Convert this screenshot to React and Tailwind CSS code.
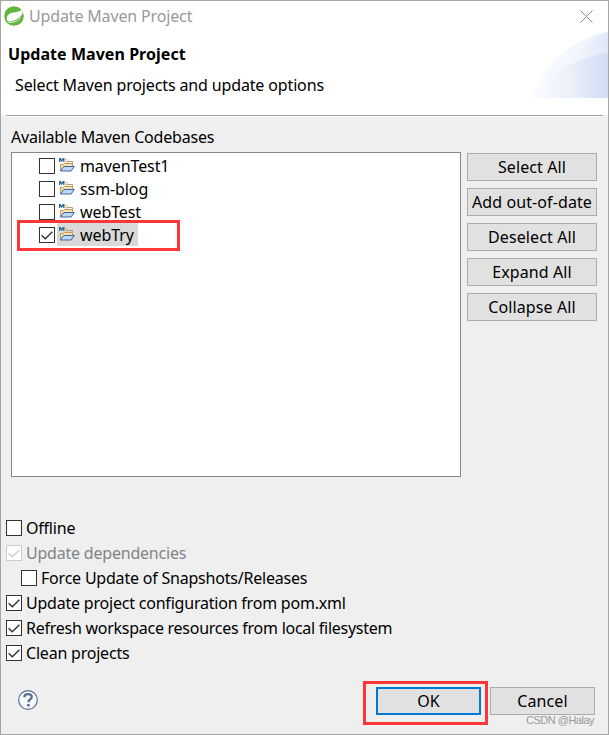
import React, { useState } from "react";

/* ---------- DATA ---------- */

const PROJECTS = ["mavenTest1", "ssm-blog", "webTest", "webTry"];

const LIST_ACTIONS = [
  "Select All",
  "Add out-of-date",
  "Deselect All",
  "Expand All",
  "Collapse All",
];

const OPTIONS = [
  { id: "offline", label: "Offline" },
  { id: "deps", label: "Update dependencies", disabled: true },
  { id: "force", label: "Force Update of Snapshots/Releases", nested: true },
  { id: "config", label: "Update project configuration from pom.xml" },
  { id: "refresh", label: "Refresh workspace resources from local filesystem" },
  { id: "clean", label: "Clean projects" },
];

/* ---------- ICONS ---------- */

const SpringIcon = () => (
  <svg width="20" height="20" viewBox="0 0 20 20" className="shrink-0">
    <circle cx="10" cy="10" r="9.8" fill="#62b53c" />
    <path
      d="M18.2 2.6C16.6 5.4 14.6 6 11.4 6.2C6.2 6.5 3 8.8 2.8 12C2.7 13.6 3.2 14.8 4 15.4C9.4 15.6 15.6 12.8 18.6 7.4C18.8 5.6 18.7 4 18.2 2.6Z"
      fill="#fff"
    />
    <path
      d="M4.4 16.2C8.6 16.8 13.6 15.8 17 11.2"
      fill="none"
      stroke="#fff"
      strokeWidth="0.8"
    />
  </svg>
);

const CloseIcon = () => (
  <svg width="13" height="13" viewBox="0 0 13 13">
    <path d="M0.5 0.5L12.5 12.5M12.5 0.5L0.5 12.5" stroke="#8a8a8a" />
  </svg>
);

const BannerArt = () => (
  <svg width="75" height="66" viewBox="0 0 75 66">
    <defs>
      <linearGradient id="wing" x1="0" x2="1">
        <stop offset="0" stopColor="#fafcff" />
        <stop offset="1" stopColor="#ecf1fb" />
      </linearGradient>
      <linearGradient id="wingTip" x1="0" x2="1">
        <stop offset="0" stopColor="#f2f6fd" />
        <stop offset="1" stopColor="#dfe7f8" />
      </linearGradient>
      <linearGradient id="wingBase" x1="0" x2="1">
        <stop offset="0" stopColor="#fafcff" />
        <stop offset="0.5" stopColor="#ebf0fa" />
        <stop offset="1" stopColor="#d1ddf4" />
      </linearGradient>
    </defs>
    <path d="M0 66C1 40 45 2 75 0V66Z" fill="url(#wing)" />
    <path d="M42 32C49 18 60 4 75 0V32Z" fill="url(#wingTip)" />
    <path d="M0 66C1 61 3 57 7 53C27 35 51 24 75 21V66Z" fill="url(#wingBase)" />
  </svg>
);

const FolderIcon = () => (
  <svg width="16" height="16" viewBox="0 0 16 16" className="shrink-0">
    <path d="M1.5 13V6.5H4.5L5.5 5.5H13.5V9" fill="#f8e3ab" stroke="#c29a58" />
    <path d="M8 3.5H13.5V5.5" fill="none" stroke="#b89a78" />
    <path d="M1.5 13L4.7 8.5H15.3L12.2 13Z" fill="#b9dafa" stroke="#44659f" />
    <path
      d="M0 4V0H1.6L2.75 1.8L3.9 0H5.5V4H4.2V2.1L2.75 4L1.3 2.1V4Z"
      fill="#2b6795"
    />
    <path d="M6.3 1.5H8V2.5L6.5 4H9" fill="none" stroke="#e0b878" strokeWidth="0.9" />
  </svg>
);

const HelpIcon = () => (
  <svg width="20" height="20" viewBox="0 0 20 20">
    <circle cx="10" cy="10" r="9.3" fill="#f7f8fa" stroke="#5b6f92" strokeWidth="1.2" />
    <path
      d="M6.3 7.2C6.3 4.8 8 4.2 10.1 4.2C12.3 4.2 13.8 5.2 13.8 7.1C13.8 9.3 10.4 9.3 10.4 12.3"
      fill="none"
      stroke="#5b6f92"
      strokeWidth="2.2"
    />
    <rect x="9" y="14.1" width="2.8" height="2.4" rx="0.8" fill="#5b6f92" />
  </svg>
);

/* ---------- UI ---------- */

const CheckBox = ({ checked, disabled, onChange, label }) => (
  <button
    type="button"
    role="checkbox"
    aria-checked={checked}
    aria-label={label}
    disabled={disabled}
    onClick={onChange}
    className={`size-4 shrink-0 border bg-white ${
      disabled ? "border-[#cccccc] text-[#cccccc]" : "border-[#333333] text-[#333333]"
    }`}
  >
    {checked && (
      <svg width="14" height="14" viewBox="0 0 14 14">
        <path
          d="M1.6 7.2L5.3 10.8L12.4 3.7"
          fill="none"
          stroke="currentColor"
          strokeWidth="1.4"
        />
      </svg>
    )}
  </button>
);

const Button = ({ children, primary, className = "" }) => (
  <button
    type="button"
    className={`flex h-7 items-center justify-center bg-[#e1e1e1] tracking-[0.1px] whitespace-nowrap ${
      primary ? "border-2 border-[#0078d7]" : "border border-[#adadad]"
    } ${className}`}
  >
    {children}
  </button>
);

/* ---------- MAIN ---------- */

const App = () => {
  const [selected, setSelected] = useState(["webTry"]);
  const [options, setOptions] = useState({
    deps: true,
    config: true,
    refresh: true,
    clean: true,
  });

  const toggleProject = (name) =>
    setSelected((prev) =>
      prev.includes(name) ? prev.filter((p) => p !== name) : [...prev, name]
    );

  const toggleOption = (id) =>
    setOptions((prev) => ({ ...prev, [id]: !prev[id] }));

  return (
    <div className="relative flex h-[735px] w-[609px] flex-col overflow-hidden border border-[#a5a5a5] bg-[#efefef] font-['Noto_Sans',sans-serif] text-base leading-5 text-black">
      {/* HEADER */}
      <header className="relative h-[114px] shrink-0 bg-white">
        <div className="flex h-[30px] items-center pr-[15px] pl-[3px]">
          <SpringIcon />
          <span className="ml-[5px] flex-1 tracking-[-0.15px] text-[#999999]">
            Update Maven Project
          </span>
          <CloseIcon />
        </div>
        <h1 className="mt-[13px] pl-[7px] font-bold tracking-[0.05px]">
          Update Maven Project
        </h1>
        <p className="mt-[11px] pl-3.5 tracking-[-0.14px]">
          Select Maven projects and update options
        </p>
        <div className="absolute top-[31px] right-0">
          <BannerArt />
        </div>
      </header>
      <div className="mr-[5px] ml-[5px] h-0.5 shrink-0 border-t border-[#a0a0a0] bg-white" />

      {/* PROJECT LIST */}
      <main className="px-2.5 pt-2.5">
        <h2 className="tracking-[-0.2px]">Available Maven Codebases</h2>
        <div className="mt-[5px] flex gap-1.5">
          <ul className="h-[325px] w-[450px] border border-[#828790] bg-white pt-px pl-[27px]">
            {PROJECTS.map((name) => (
              <li key={name} className="relative flex h-[23px] items-start">
                <div className="flex pt-1">
                  <CheckBox
                    label={name}
                    checked={selected.includes(name)}
                    onChange={() => toggleProject(name)}
                  />
                </div>
                <span
                  className={`ml-0.5 flex h-[23px] items-center gap-[5px] pr-1 pl-0.5 tracking-[-0.1px] ${
                    name === "webTry" ? "bg-[#d9d9d9]" : ""
                  }`}
                >
                  <FolderIcon />
                  {name}
                </span>
                {name === "webTry" && (
                  <span className="pointer-events-none absolute -top-[3px] -left-[22px] h-[31px] w-[163px] border-3 border-[#fb3737]" />
                )}
              </li>
            ))}
          </ul>
          <div className="flex w-[130px] flex-col gap-[7px] pt-px">
            {LIST_ACTIONS.map((action) => (
              <Button key={action}>{action}</Button>
            ))}
          </div>
        </div>
      </main>

      {/* OPTIONS */}
      <section className="mt-[38px] pl-[5px]">
        {OPTIONS.map(({ id, label, disabled, nested }) => (
          <div
            key={id}
            className={`flex h-[25px] items-center gap-1 ${
              nested ? "pl-[15px]" : ""
            } ${disabled ? "text-[#838383]" : ""} ${
              id === "refresh" ? "tracking-[-0.26px]" : "tracking-[-0.21px]"
            }`}
          >
            <CheckBox
              label={label}
              checked={!!options[id]}
              disabled={disabled}
              onChange={() => toggleOption(id)}
            />
            <span>{label}</span>
          </div>
        ))}
      </section>

      {/* FOOTER */}
      <footer className="mt-[22px] flex items-start pr-[13px] pl-[17px]">
        <div className="mt-[3px] flex-1">
          <HelpIcon />
        </div>
        <div className="relative mr-[9px]">
          <Button primary className="w-[105px]">
            OK
          </Button>
          <span className="pointer-events-none absolute -top-1.5 -left-[13px] h-11 w-[125px] border-3 border-[#fb3737]" />
        </div>
        <Button className="w-[105px]">Cancel</Button>
      </footer>
      <span className="absolute right-[14px] bottom-[6px] font-['Liberation_Sans',sans-serif] text-[11px] leading-4 tracking-[-0.5px] text-[#999999]">
        CSDN @Halay
      </span>
    </div>
  );
};

export default App;
